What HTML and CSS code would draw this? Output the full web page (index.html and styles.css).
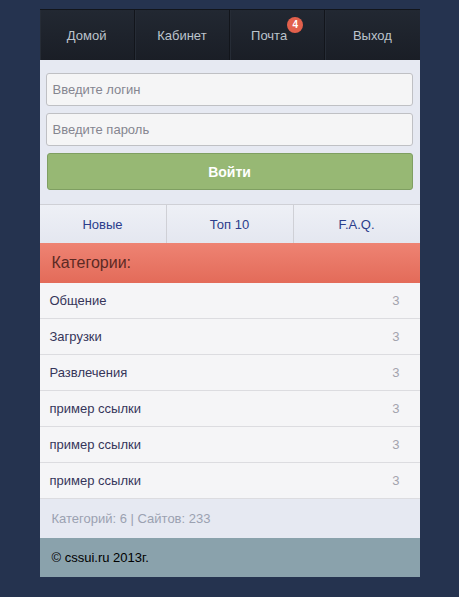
FILE: index.html
```html
<!DOCTYPE html>
<html lang="ru">
<head>
    <meta charset="UTF-8">
    <meta name="viewport" content="width=device-width, initial-scale=1.0">
    <title>cssui.ru - мобильное меню</title>
    <link rel="stylesheet" href="styles.css">
</head>
<body>
    <div class="wrapper">
        <nav class="top-nav">
            <a href="#">Домой</a>
            <a href="#">Кабинет</a>
            <a href="#">Почта<span class="badge">4</span></a>
            <a href="#">Выход</a>
        </nav>

        <form class="login-form">
            <input type="text" placeholder="Введите логин">
            <input type="password" placeholder="Введите пароль">
            <button type="submit" class="login-btn">Войти</button>
        </form>

        <div class="tabs">
            <a href="#">Новые</a>
            <a href="#">Топ 10</a>
            <a href="#">F.A.Q.</a>
        </div>

        <div class="cat-title">Категории:</div>

        <ul class="cat-list">
            <li><a href="#">Общение</a><span class="count">3</span></li>
            <li><a href="#">Загрузки</a><span class="count">3</span></li>
            <li><a href="#">Развлечения</a><span class="count">3</span></li>
            <li><a href="#">пример ссылки</a><span class="count">3</span></li>
            <li><a href="#">пример ссылки</a><span class="count">3</span></li>
            <li><a href="#">пример ссылки</a><span class="count">3</span></li>
        </ul>

        <div class="stats">Категорий: 6 | Сайтов: 233</div>

        <footer class="footer">© cssui.ru 2013г.</footer>
    </div>
</body>
</html>
```

FILE: styles.css
```css
body {
    margin: 0;
    background-color: #25334f;
    font-family: "Liberation Sans", Arial, sans-serif;
    font-size: 13px;
}

.wrapper {
    width: 380px;
    margin: 9px auto 0;
}

/* Top menu */
.top-nav {
    display: flex;
    height: 50px;
    background: linear-gradient(#222832, #1a1e26);
    border-top: 1px solid #12151b;
}

.top-nav a {
    flex: 1;
    display: flex;
    align-items: center;
    justify-content: center;
    color: #bcc4cc;
    text-decoration: none;
    border-right: 1px solid #12151b;
    box-shadow: inset 1px 0 0 #262c36;
}

.top-nav a:last-child {
    border-right: none;
}

.badge {
    position: relative;
    top: -10px;
    width: 16px;
    height: 16px;
    border-radius: 50%;
    background-color: #e2604c;
    color: #fff;
    font-size: 10px;
    font-weight: bold;
    line-height: 16px;
    text-align: center;
}

/* Login */
.login-form {
    display: flex;
    flex-direction: column;
    gap: 7px;
    margin: 0;
    padding: 13px 7px 14px 6px;
    background-color: #e6e9f2;
}

.login-form input {
    height: 33px;
    box-sizing: border-box;
    padding: 0 6px;
    border: 1px solid #bfc0c4;
    border-radius: 3px;
    background-color: #f5f5f6;
    font-family: inherit;
    font-size: 13px;
    color: #333;
}

.login-form input::placeholder {
    color: #858590;
}

.login-btn {
    height: 37px;
    margin-left: 1px;
    border: 1px solid #7f9f62;
    border-radius: 3px;
    background-color: #97b874;
    color: #fff;
    font-family: inherit;
    font-size: 14px;
    font-weight: bold;
    cursor: pointer;
}

/* Tabs */
.tabs {
    display: flex;
    height: 38px;
    border-top: 1px solid #cfd0d6;
    background: linear-gradient(#eef0f6, #e4e7f0);
}

.tabs a {
    flex: 1;
    display: flex;
    align-items: center;
    justify-content: center;
    color: #2b3d8c;
    text-decoration: none;
    border-right: 1px solid #cfd0d6;
}

.tabs a:last-child {
    border-right: none;
}

/* Categories */
.cat-title {
    height: 40px;
    padding-left: 12px;
    display: flex;
    align-items: center;
    background: linear-gradient(#ee8373, #e36b59);
    color: #5c2a24;
    font-size: 16px;
}

.cat-list {
    list-style: none;
    margin: 0;
    padding: 0;
}

.cat-list li {
    display: flex;
    justify-content: space-between;
    align-items: center;
    height: 35px;
    padding: 0 20px 0 10px;
    background-color: #f5f5f7;
    border-bottom: 1px solid #dcdce0;
}

.cat-list a {
    color: #35355a;
    text-decoration: none;
}

.count {
    color: #a3a3ad;
}

.stats {
    height: 39px;
    padding-left: 12px;
    display: flex;
    align-items: center;
    background-color: #e6e9f2;
    color: #9ba1b1;
}

.footer {
    height: 39px;
    padding-left: 12px;
    display: flex;
    align-items: center;
    background-color: #8aa2ac;
    color: #000;
}
```
